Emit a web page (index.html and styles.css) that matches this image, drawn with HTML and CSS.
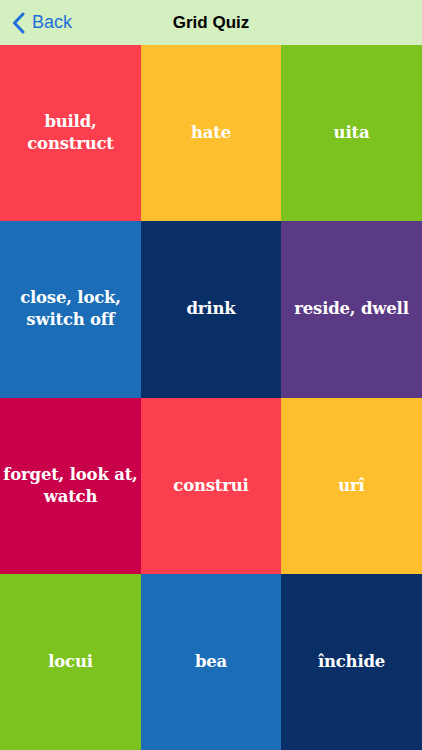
FILE: index.html
```html
<!DOCTYPE html>
<html>
<head>
<meta charset="utf-8">
<link rel="stylesheet" href="styles.css">
</head>
<body>
<div class="app">
  <header class="nav">
    <div class="back">
      <svg class="chev" width="13" height="22" viewBox="0 0 13 22"><path d="M11 2 L2.5 11 L11 20" fill="none" stroke="#1f6fdc" stroke-width="3" stroke-linecap="round" stroke-linejoin="round"/></svg>
      <span>Back</span>
    </div>
    <div class="title">Grid Quiz</div>
  </header>
  <main class="grid">
    <div class="cell red">build,<br>construct</div>
    <div class="cell yellow">hate</div>
    <div class="cell green">uita</div>
    <div class="cell blue">close, lock,<br>switch off</div>
    <div class="cell navy">drink</div>
    <div class="cell purple">reside, dwell</div>
    <div class="cell crimson">forget, look at,<br>watch</div>
    <div class="cell red">construi</div>
    <div class="cell yellow">urî</div>
    <div class="cell green">locui</div>
    <div class="cell blue">bea</div>
    <div class="cell navy">închide</div>
  </main>
</div>
</body>
</html>
```
FILE: styles.css
```css
html, body { margin: 0; padding: 0; }
body { width: 422px; height: 750px; overflow: hidden; font-family: "Liberation Sans", Arial, sans-serif; }
.app { display: flex; flex-direction: column; height: 750px; }
.nav { height: 45px; background: #d4f0c0; position: relative; display: flex; align-items: center; justify-content: center; flex: none; }
.back { position: absolute; left: 12px; top: 0; height: 45px; display: flex; align-items: center; gap: 7px; color: #1f6fdc; font-size: 18px; }
.chev { display: block; }
.title { font-weight: bold; font-size: 17px; color: #000; }
.grid { flex: 1; display: grid; grid-template-columns: 141px 140px 141px; grid-template-rows: repeat(4, 1fr); }
.cell { display: flex; align-items: center; justify-content: center; text-align: center; color: #fff; font-family: "DejaVu Serif", serif; font-weight: bold; font-size: 16.5px; line-height: 22px; letter-spacing: -0.2px; padding: 0 2px; }
.red { background: #fc3f4e; }
.yellow { background: #fdbf2e; }
.green { background: #7dc31f; }
.blue { background: #1b6db8; }
.navy { background: #0a2e66; }
.purple { background: #5a3a84; }
.crimson { background: #c9004a; }
```
